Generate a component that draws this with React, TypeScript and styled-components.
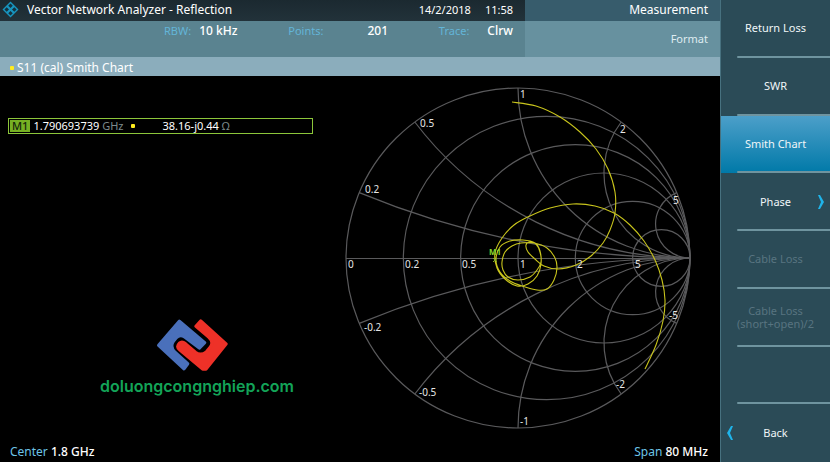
import React from "react";
import styled, { createGlobalStyle, css } from "styled-components";

const GlobalStyle = createGlobalStyle`
  *, *::before, *::after { box-sizing: border-box; }
  body {
    margin: 0;
    background: #000;
    color: #fff;
    font: 400 12px/16px "Noto Sans", "Open Sans", sans-serif;
  }
`;

const Screen = styled.div`
  display: grid;
  grid-template-columns: minmax(0, 1fr) 110px;
  min-height: 100vh;
`;

const Main = styled.main`
  display: flex;
  flex-direction: column;
  min-width: 0;
`;

const HeaderGrid = styled.header`
  display: grid;
  grid-template-columns: minmax(0, 1fr) 195px;
`;

const TitleBar = styled.div`
  display: flex;
  align-items: center;
  gap: 8px;
  height: 21px;
  padding: 0 12px 2px 2px;
  background: linear-gradient(#1b2930, #22323a);
`;

const Title = styled.h1`
  flex: 1;
  margin: 0;
  font-size: 12px;
  font-weight: 400;
  white-space: nowrap;
`;

const Clock = styled.div`
  display: flex;
  gap: 14px;
  font-size: 11px;
`;

const MenuTitle = styled.div<{ $sub?: boolean }>`
  display: flex;
  align-items: center;
  justify-content: flex-end;
  padding: ${(p) => (p.$sub ? "0 12px 0 0" : "0 12px 2px 0")};
  background: ${(p) => (p.$sub ? "#67919f" : "#375c6c")};
  color: ${(p) => (p.$sub ? "#dfecf1" : "#fff")};
  font-size: ${(p) => (p.$sub ? "11px" : "12px")};
`;

const Settings = styled.dl`
  display: flex;
  justify-content: space-between;
  height: 36px;
  margin: 0;
  padding: 2px 12px 0 164px;
  background: #5a8390;
`;

const Setting = styled.div<{ $gap: number }>`
  display: flex;
  gap: ${(p) => p.$gap}px;

  dt { color: #63b5d8; font-size: 11px; }
  dd { margin: 0; font-weight: 500; }
`;

const TraceBar = styled.div`
  display: flex;
  align-items: center;
  gap: 3px;
  height: 19px;
  padding: 2px 0 0 10px;
  background: #8badbc;
`;

const Dot = styled.span`
  width: 4px;
  height: 4px;
  border-radius: 1px;
  background: #ffec1e;
`;

const Display = styled.section`
  flex: 1;
  display: grid;
  grid-template-columns: minmax(0, 1fr) minmax(0, 1fr);
  align-items: start;
`;

const Readouts = styled.div`
  display: flex;
  flex-direction: column;
  padding: 42px 0 0 8px;
`;

const Marker = styled.div`
  display: flex;
  align-items: center;
  width: 305px;
  height: 16px;
  padding: 1px;
  border: 1px solid #8cc63a;
  font-size: 11px;
`;

const MarkerTag = styled.b`
  padding: 0 2px;
  margin-right: 3px;
  background: #76b023;
  color: #14240a;
  font-weight: 500;
  line-height: 12px;
`;

const Reading = styled.span`
  margin-right: 8px;
`;

const Impedance = styled.span`
  margin-left: 27px;
`;

const Unit = styled.span`
  color: #7d8a8c;
`;

const Brand = styled.div`
  display: flex;
  flex-direction: column;
  align-items: center;
  gap: 4px;
  width: 194px;
  margin: 184px 0 0 92px;
  color: #13a458;
  font: 600 16px/20px Inter, sans-serif;

  svg { display: block; margin-right: 10px; }
`;

const Chart = styled.svg`
  display: block;
  width: 360px;
  height: 356px;
  justify-self: end;
  margin: 4px 20px 0 0;
`;

const ChartLabel = styled.text`
  fill: #e6e6e6;
  font-size: 10px;
`;

const Footer = styled.footer`
  display: flex;
  justify-content: space-between;
  padding: 0 12px 2px 10px;
  font-weight: 500;

  span { color: #6cc4e8; font-weight: 400; }
`;

const Softkeys = styled.nav`
  display: grid;
  grid-template-rows: repeat(8, minmax(0, 1fr));
  border-left: 1px solid #47717f;
  background: #2b4b57;
`;

const Softkey = styled.button<{ $active?: boolean; $last?: boolean }>`
  position: relative;
  border: 0;
  padding: 0 0 2px;
  background: ${(p) => (p.$active ? "linear-gradient(#4c9fc9, #0079a8)" : "none")};
  color: #f0f6f8;
  font: inherit;
  font-size: 11px;
  line-height: 13px;
  white-space: pre-line;

  &:disabled { color: #587480; }

  ${(p) =>
    !p.$last &&
    css`
      &::after {
        content: "";
        position: absolute;
        right: 0;
        bottom: 0;
        width: 93px;
        height: 2px;
        border-radius: 1px 0 0 1px;
        background: #6f949f;
      }
    `}
`;

const Arrow = styled.svg<{ $side: "left" | "right" }>`
  position: absolute;
  top: calc(50% - 8px);
  ${(p) => p.$side}: 5px;
  width: 8px;
  height: 16px;
`;

const CX = 518;
const CY = 258;
const RX = 172;
const RY = 170;

const RESISTANCES = [0, 0.2, 0.5, 1, 2, 5];
const REACTANCES = [0.2, 0.5, 1, 2, 5];

function reactanceArc(x: number) {
  const d = x * x + 1;
  const px = CX + (RX * (x * x - 1)) / d;
  const py = CY - (RY * 2 * x) / d;
  const r = 1 / Math.abs(x);
  return `M${px} ${py}A${RX * r} ${RY * r} 0 0 ${x > 0 ? 0 : 1} ${CX + RX} ${CY}`;
}

const LABELS: [string, number, number][] = [
  ["0", 348, 268],
  ["0.2", 405, 268],
  ["0.5", 462, 268],
  ["1", 520, 268],
  ["2", 577, 268],
  ["5", 635, 268],
  ["0.2", 365, 193],
  ["0.5", 420, 127],
  ["1", 520, 98],
  ["2", 620, 133],
  ["5", 673, 204],
  ["-0.2", 364, 331],
  ["-0.5", 419, 396],
  ["-1", 520, 425],
  ["-2", 616, 388],
  ["-5", 669, 319],
];

const TRACE: [number, number][] = [
  [512, 102], [536, 106], [560, 117], [580, 132], [596, 149], [608, 169], [615, 192],
  [615, 213], [610, 230], [603, 243], [591, 256], [576, 265], [558, 269], [544, 266],
  [535, 259], [528, 252], [526, 245], [530, 242],
  [536, 244], [540, 252], [541, 262], [537, 270], [530, 277], [518, 280], [508, 277],
  [503, 270], [502, 262], [505, 252], [512, 246], [521, 243], [534, 243], [547, 248],
  [555, 258], [557, 268], [554, 280], [547, 289], [537, 290], [522, 286], [510, 281],
  [500, 272], [496, 260], [500, 247], [510, 241], [523, 240], [535, 243], [540, 251],
  [541, 264], [537, 276], [528, 284], [517, 286], [505, 279], [497, 268], [495, 253],
  [502, 238], [514, 225], [530, 216], [550, 208], [573, 204], [595, 206], [614, 213],
  [630, 225], [644, 241], [655, 260], [662, 280], [665, 300], [663, 321], [656, 345],
  [645, 369],
];

function smoothPath(points: [number, number][]) {
  let d = `M${points[0]}`;
  for (let i = 0; i < points.length - 1; i++) {
    const p0 = points[Math.max(i - 1, 0)];
    const p1 = points[i];
    const p2 = points[i + 1];
    const p3 = points[Math.min(i + 2, points.length - 1)];
    d += `C${p1[0] + (p2[0] - p0[0]) / 6} ${p1[1] + (p2[1] - p0[1]) / 6} ${
      p2[0] - (p3[0] - p1[0]) / 6
    } ${p2[1] - (p3[1] - p1[1]) / 6} ${p2[0]} ${p2[1]}`;
  }
  return d;
}

function SmithChart() {
  return (
    <Chart viewBox="340 80 360 356" role="img" aria-label="S11 Smith chart">
      <g fill="none" stroke="#5a5a5c" strokeWidth="1.2">
        {RESISTANCES.map((r) => (
          <ellipse
            key={r}
            cx={CX + (RX * r) / (r + 1)}
            cy={CY}
            rx={RX / (r + 1)}
            ry={RY / (r + 1)}
          />
        ))}
        {REACTANCES.map((x) => (
          <g key={x}>
            <path d={reactanceArc(x)} />
            <path d={reactanceArc(-x)} />
          </g>
        ))}
        <path d={`M${CX - RX} ${CY + 0.5}H${CX + RX}`} />
      </g>
      <path d={smoothPath(TRACE)} fill="none" stroke="#c9c51c" strokeWidth="1.1" />
      {LABELS.map(([text, x, y]) => (
        <ChartLabel key={`${x}-${y}`} x={x} y={y}>
          {text}
        </ChartLabel>
      ))}
      <text x="489" y="255" fill="#86d62c" fontSize="8" fontWeight="700">
        M1
      </text>
      <path d="M493 258l4 4m0-4l-4 4" stroke="#7fae24" />
    </Chart>
  );
}

function DeviceLogo() {
  return (
    <svg width="17" height="17" viewBox="0 0 18 18" aria-hidden="true">
      <path d="M9 0.500l8.500 8.500-8.500 8.500L0.500 9z" fill="#1795c0" />
      <path
        d="M9 2.600l2.400 2.400L9 7.400 6.600 5zM5 6.600L7.400 9 5 11.400 2.600 9zM13 6.600L15.400 9 13 11.400 10.600 9zM9 10.600l2.400 2.400L9 15.400 6.600 13z"
        fill="#16323e"
      />
    </svg>
  );
}

function BrandLogo() {
  return (
    <svg width="72" height="54" viewBox="20 16 216 162" aria-hidden="true">
      <g strokeLinejoin="round" strokeWidth="10">
        <path
          d="M90 26L28 98L104 168L115 153L76 118Q60 102 72 86L80 76Q92 62 106 73L150 106L166 90Z"
          fill="#4a70bb"
          stroke="#4a70bb"
        />
        <path
          d="M154 25L140 41L178 73Q196 89 182 105L172 117Q154 132 138 119L108 93Q98 85 90 92Q80 102 91 111L160 169H170L230 94Z"
          fill="#ee3128"
          stroke="#ee3128"
        />
      </g>
    </svg>
  );
}

type Key = { label: string; active?: boolean; disabled?: boolean; arrow?: "left" | "right" };

const KEYS: Key[] = [
  { label: "Return Loss" },
  { label: "SWR" },
  { label: "Smith Chart", active: true },
  { label: "Phase", arrow: "right" },
  { label: "Cable Loss", disabled: true },
  { label: "Cable Loss\n(short+open)/2", disabled: true },
  { label: "", disabled: true },
  { label: "Back", arrow: "left" },
];

export default function App() {
  return (
    <Screen>
      <GlobalStyle />
      <Main>
        <HeaderGrid>
          <TitleBar>
            <DeviceLogo />
            <Title>Vector Network Analyzer - Reflection</Title>
            <Clock>
              <span>14/2/2018</span>
              <span>11:58</span>
            </Clock>
          </TitleBar>
          <MenuTitle>Measurement</MenuTitle>
          <Settings>
            <Setting $gap={8}>
              <dt>RBW:</dt>
              <dd>10 kHz</dd>
            </Setting>
            <Setting $gap={44}>
              <dt>Points:</dt>
              <dd>201</dd>
            </Setting>
            <Setting $gap={18}>
              <dt>Trace:</dt>
              <dd>Clrw</dd>
            </Setting>
          </Settings>
          <MenuTitle $sub>Format</MenuTitle>
        </HeaderGrid>
        <TraceBar>
          <Dot />
          S11 (cal) Smith Chart
        </TraceBar>
        <Display>
          <Readouts>
            <Marker>
              <MarkerTag>M1</MarkerTag>
              <Reading>
                1.790693739 <Unit>GHz</Unit>
              </Reading>
              <Dot />
              <Impedance>
                38.16-j0.44 <Unit>Ω</Unit>
              </Impedance>
            </Marker>
            <Brand>
              <BrandLogo />
              doluongcongnghiep.com
            </Brand>
          </Readouts>
          <SmithChart />
        </Display>
        <Footer>
          <div>
            <span>Center</span> 1.8 GHz
          </div>
          <div>
            <span>Span</span> 80 MHz
          </div>
        </Footer>
      </Main>
      <Softkeys aria-label="Format">
        {KEYS.map((key, i) => (
          <Softkey
            key={i}
            type="button"
            $active={key.active}
            $last={i === KEYS.length - 1}
            disabled={key.disabled}
            aria-pressed={key.active}
          >
            {key.label}
            {key.arrow && (
              <Arrow $side={key.arrow} viewBox="0 0 8 16" aria-hidden="true">
                <path
                  d={key.arrow === "right" ? "M1 1h2l4 7-4 7H1l3-7z" : "M7 1H5L1 8l4 7h2L4 8z"}
                  fill="#1fb4ea"
                />
              </Arrow>
            )}
          </Softkey>
        ))}
      </Softkeys>
    </Screen>
  );
}
